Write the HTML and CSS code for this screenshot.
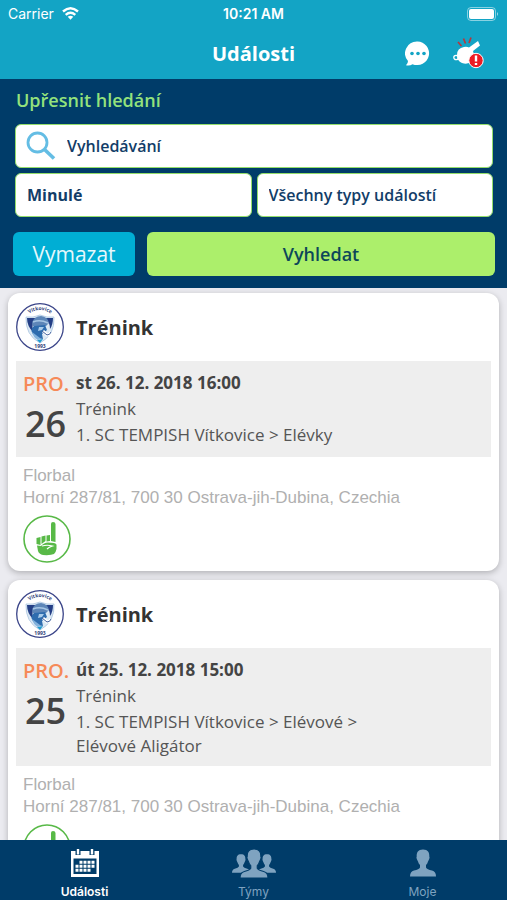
FILE: index.html
```html
<!DOCTYPE html>
<html lang="cs">
<head>
    <meta charset="UTF-8">
    <meta name="viewport" content="width=device-width, initial-scale=1.0">
    <title>Události</title>
    <link rel="stylesheet" href="styles.css">
</head>
<body>
    <!-- Shared icons -->
    <svg class="sprite" aria-hidden="true">
        <path id="logo-arc" d="M7 23 A17 16 0 0 1 41 23" fill="none"/>
        <symbol id="team-logo" viewBox="0 0 48 48">
            <circle cx="24" cy="24" r="23.3" fill="#fff" stroke="#3b4589" stroke-width="1.3"/>
            <path d="M10 14 Q17 15 24 12 Q31 15 38 14 Q39 32 24 40 Q9 32 10 14Z" fill="#dce9f4" stroke="#a9c4df" stroke-width=".8"/>
            <path d="M11 15 L20 15 Q15 20 17 29 Q11 23 11 15Z" fill="#243f86"/>
            <path d="M29 15 L37 15 Q37 22 34 26 Q34 19 29 15Z" fill="#243f86"/>
            <path d="M16 20 Q18 13 25 13 Q32 14 33 20 L30 23 L17 23Z" fill="#5d86b8"/>
            <path d="M17 19 Q24 16 32 20" fill="none" stroke="#a6c6e5" stroke-width="1.4"/>
            <path d="M18 23 L29 22 L31 27 L26 31 L27 36 L21 35 Q14 30 16 25Z" fill="#2e6cae"/>
            <path d="M23 24 L28 24 L26 27 L22 28Z" fill="#a8cbea"/>
            <path d="M16 29 L24 35 L22 37 Q17 34 16 29Z" fill="#83b2dd"/>
            <path d="M27 28 L31 32 Q34 32 35 29" fill="none" stroke="#fff" stroke-width="3"/>
            <path d="M26 28 L31 32 Q34 32 35 29" fill="none" stroke="#405f9c" stroke-width="1"/>
            <path d="M21 37 L27 36 L24 40Z" fill="#219bd0"/>
        </symbol>
        <symbol id="hand" viewBox="0 0 48 48">
            <circle cx="24" cy="24" r="23" fill="#fff" stroke="#58b947" stroke-width="1.6"/>
            <g fill="#58b947">
                <path d="M28 9 Q28 7 30 7 Q32.500 7 32.500 9 V27 L28 26Z"/>
                <path d="M23.500 20.500 L27 20 V26 L23.500 26.500Z"/>
                <path d="M18.500 21.500 L22.500 20.500 V26 L18.500 29Z"/>
                <path d="M13.500 23 L17.500 22 V30 L13.500 29Z"/>
                <path d="M14 30.500 L18 31 Q21 27.500 25 27.500 L31 28 Q34 28.500 33.500 31 V34 Q33 37 31 39 Q28 40.500 20 40 Q16 39 15 36Z"/>
            </g>
            <path d="M19 31 Q24 29.500 29.500 31 Q26 32 24 34" fill="none" stroke="#fff" stroke-width="1.2"/>
        </symbol>
        <symbol id="person" viewBox="0 0 26 27">
            <path d="M13 0 C8 0 6.500 3 6.700 7 Q6 8 7 10 Q7.500 11 8 12 Q8.500 14 10 15.500 V18 Q9 20 4 21 Q0 22 0 27 H26 Q26 22 22 21 Q17 20 16 18 V15.500 Q17.500 14 18 12 Q18.500 11 19 10 Q20 8 19.300 7 C19.500 3 18 0 13 0Z"/>
        </symbol>
    </svg>

    <header class="header">
        <div class="status-bar">
            <div class="carrier">
                <span>Carrier</span>
                <svg width="17" height="13" viewBox="0 0 17 13" fill="none" stroke="#fff" stroke-width="2.400">
                    <path d="M1 4.500 Q8.500 -2 16 4.500M3.700 7.800 Q8.500 3.800 13.300 7.800"/>
                    <path d="M5.700 9.800 Q8.500 7.800 11.300 9.800 L8.500 12.800Z" fill="#fff" stroke="none"/>
                </svg>
            </div>
            <span class="time">10:21 AM</span>
            <svg class="battery" width="32" height="14" viewBox="0 0 32 14">
                <rect x=".5" y=".5" width="28" height="13" rx="3.500" fill="none" stroke="#fff" stroke-opacity=".5"/>
                <rect x="2" y="2" width="25" height="10" rx="2" fill="#fff"/>
                <path d="M30 5 Q32 7 30 9Z" fill="#fff" fill-opacity=".6"/>
            </svg>
        </div>
        <div class="title-bar">
            <h1>Události</h1>
            <div class="actions">
                <button type="button" class="icon-btn" aria-label="Zprávy">
                    <svg width="25" height="25" viewBox="0 0 25 25">
                        <path d="M12.500 0.500 A12 11.800 0 1 1 7.500 23.200 Q5 25 1 24.300 Q3 22.500 3 20 A12 11.800 0 0 1 12.500 .5Z" fill="#fff"/>
                        <g fill="#13a4c5"><circle cx="7" cy="12.500" r="1.800"/><circle cx="13" cy="12.500" r="1.800"/><circle cx="19" cy="12.500" r="1.800"/></g>
                    </svg>
                </button>
                <button type="button" class="icon-btn" aria-label="Upozornění">
                    <svg width="31" height="32" viewBox="0 0 31 32">
                        <path d="M5 5 L8.500 9M10.500 1.500 L12.500 6.500M18 .5 L16 6" stroke="#b9363c" stroke-width="1.700" fill="none"/>
                        <circle cx="3" cy="20.500" r="2.200" fill="none" stroke="#fff" stroke-width="1.300"/>
                        <path d="M4 18 Q4 11 11 10 Q14 9.500 16 10.500 L25 4 L27 8.500 L20 14 Q22 19 19 24 Q15 28 9 26 Q4 24 4 18Z" fill="#fff"/>
                        <circle cx="23" cy="23.500" r="7.200" fill="#ed1c24" stroke="#fff" stroke-width="1"/>
                        <path d="M23 18.500 V24.500M23 26 V28" stroke="#fff" stroke-width="2.400"/>
                    </svg>
                </button>
            </div>
        </div>
    </header>

    <form class="search">
        <h2>Upřesnit hledání</h2>
        <div class="fields">
            <label class="search-box">
                <svg width="30" height="30" viewBox="0 0 30 30" fill="none" stroke="#64bde4">
                    <circle cx="11.500" cy="11.500" r="9.500" stroke-width="2.800"/>
                    <path d="M18 18 L28 27.500" stroke-width="3.600"/>
                </svg>
                <input type="text" placeholder="Vyhledávání" aria-label="Vyhledávání">
            </label>
            <select class="period" aria-label="Období">
                <option>Minulé</option>
            </select>
            <select aria-label="Typ události">
                <option>Všechny typy událostí</option>
            </select>
        </div>
        <div class="buttons">
            <button type="reset" class="clear-btn">Vymazat</button>
            <button type="button" class="submit-btn">Vyhledat</button>
        </div>
    </form>

    <main class="events">
        <article class="card">
            <div class="card-header">
                <svg class="round-icon" viewBox="0 0 48 48">
                    <use href="#team-logo"/>
                    <text class="logo-text" text-anchor="middle"><textPath href="#logo-arc" startOffset="50%">Vítkovice</textPath></text>
                    <text class="logo-text" x="24" y="45" text-anchor="middle">1993</text>
                </svg>
                <h3>Trénink</h3>
            </div>
            <div class="details">
                <div class="day">
                    <span class="month">PRO.</span>
                    <span class="number">26</span>
                </div>
                <div class="info">
                    <p class="date">st 26. 12. 2018 16:00</p>
                    <p>Trénink</p>
                    <p class="team">1. SC TEMPISH Vítkovice &gt; Elévky</p>
                </div>
            </div>
            <div class="venue">
                <p>Florbal</p>
                <p>Horní 287/81, 700 30 Ostrava-jih-Dubina, Czechia</p>
                <button type="button" class="icon-btn" aria-label="Účast"><svg class="round-icon"><use href="#hand"/></svg></button>
            </div>
        </article>

        <article class="card">
            <div class="card-header">
                <svg class="round-icon" viewBox="0 0 48 48">
                    <use href="#team-logo"/>
                    <text class="logo-text" text-anchor="middle"><textPath href="#logo-arc" startOffset="50%">Vítkovice</textPath></text>
                    <text class="logo-text" x="24" y="45" text-anchor="middle">1993</text>
                </svg>
                <h3>Trénink</h3>
            </div>
            <div class="details">
                <div class="day">
                    <span class="month">PRO.</span>
                    <span class="number">25</span>
                </div>
                <div class="info">
                    <p class="date">út 25. 12. 2018 15:00</p>
                    <p>Trénink</p>
                    <p class="team">1. SC TEMPISH Vítkovice &gt; Elévové &gt;<br>Elévové Aligátor</p>
                </div>
            </div>
            <div class="venue">
                <p>Florbal</p>
                <p>Horní 287/81, 700 30 Ostrava-jih-Dubina, Czechia</p>
                <button type="button" class="icon-btn" aria-label="Účast"><svg class="round-icon"><use href="#hand"/></svg></button>
            </div>
        </article>
    </main>

    <nav class="tabs">
        <a href="#" class="active">
            <svg width="28" height="28" viewBox="0 0 28 28">
                <path d="M0 2 H28 V28 H0Z" fill="#fff"/>
                <path d="M2.500 9.500 H25.500 V25 H2.500Z" fill="#003c69"/>
                <path d="M7 0 V6M21 0 V6" stroke="#003c69" stroke-width="5"/>
                <path d="M7 0 V5.500M21 0 V5.500" stroke="#fff" stroke-width="2.400"/>
                <path d="M8.500 13.200 H24M4.500 17.200 H24M4.500 21.200 H20" stroke="#fff" stroke-width="3" stroke-dasharray="3 1"/>
            </svg>
            <span>Události</span>
        </a>
        <a href="#">
            <svg width="44" height="30" viewBox="0 0 44 30" fill="currentColor">
                <use href="#person" x="0" y="5" width="18" height="19"/>
                <use href="#person" x="26" y="5" width="18" height="19"/>
                <use href="#person" x="8" y="0" width="28" height="29" stroke="#003c69" stroke-width="1"/>
            </svg>
            <span>Týmy</span>
        </a>
        <a href="#">
            <svg width="26" height="28" fill="currentColor"><use href="#person"/></svg>
            <span>Moje</span>
        </a>
    </nav>
</body>
</html>
```
FILE: styles.css
```css
* {
    box-sizing: border-box;
}
body {
    display: flex;
    flex-direction: column;
    height: 100vh;
    margin: 0;
    font-family: "Open Sans", "Noto Sans", sans-serif;
    background-color: #ebebf0;
    color: #444;
}
h1, h2, h3, p {
    margin: 0;
}
svg {
    display: block;
}
button, input, select {
    font-family: inherit;
}
.sprite {
    position: absolute;
    width: 0;
    height: 0;
}
.icon-btn {
    padding: 0;
    border: none;
    background: none;
    cursor: pointer;
}

/* Header */
.header {
    background-color: #13a4c5;
    color: white;
}
.status-bar {
    display: grid;
    grid-template-columns: 1fr auto 1fr;
    align-items: center;
    height: 27px;
    padding: 0 8px;
    font: 14px "Inter", sans-serif;
}
.carrier {
    display: flex;
    align-items: center;
    gap: 8px;
}
.time {
    font-weight: 600;
}
.battery {
    justify-self: end;
}
.title-bar {
    display: grid;
    grid-template-columns: 1fr auto 1fr;
    align-items: center;
    height: 52px;
    padding: 0 23px;
}
.title-bar h1 {
    grid-column: 2;
    font-size: 20px;
    font-weight: bold;
}
.actions {
    display: flex;
    align-items: center;
    justify-content: flex-end;
    gap: 23px;
}

/* Search form */
.search {
    padding: 8px 12px 12px 13px;
    background-color: #003c69;
}
.search h2 {
    padding-left: 3px;
    font-size: 18px;
    font-weight: 600;
    line-height: 26px;
    color: #93e27c;
}
.fields {
    display: grid;
    grid-template-columns: 1fr 1fr;
    gap: 5px;
    padding: 11px 2px 15px;
}
.search-box, select {
    height: 44px;
    border: 1px solid #93dc6b;
    border-radius: 6px;
    background-color: white;
    color: #123d68;
    font-size: 16px;
    font-weight: 600;
}
.search-box {
    grid-column: 1 / 3;
    display: flex;
    align-items: center;
    gap: 11px;
    padding: 0 10px;
}
.search-box input {
    flex: 1;
    min-width: 0;
    padding: 0;
    border: none;
    outline: none;
    background: none;
    color: inherit;
    font-size: 16px;
    font-weight: 600;
}
.search-box input::placeholder {
    color: inherit;
    opacity: 1;
}
select {
    appearance: none;
    min-width: 0;
    padding: 0 11px;
}
.period {
    font-weight: bold;
}
.buttons {
    display: flex;
    gap: 12px;
}
.buttons button {
    height: 44px;
    padding: 0;
    border: none;
    border-radius: 6px;
    cursor: pointer;
}
.clear-btn {
    width: 122px;
    background-color: #00aed4;
    color: #e6f8fc;
    font-size: 21px;
}
.submit-btn {
    flex: 1;
    background-color: #acef6b;
    color: #0d4759;
    font-size: 18px;
    font-weight: 600;
}

/* Event list */
.events {
    flex: 1;
    min-height: 0;
    overflow: hidden;
    padding: 5px 8px 0;
}
.card {
    margin-bottom: 9px;
    padding: 10px 8px 8px;
    border-radius: 12px;
    background-color: white;
    box-shadow: 0 2px 6px rgba(0,0,0,0.25);
}
.card-header {
    display: flex;
    align-items: center;
    gap: 12px;
    margin-bottom: 10px;
}
.card-header h3 {
    font-size: 20px;
    font-weight: bold;
    color: #333;
}
.round-icon {
    width: 48px;
    height: 48px;
}
.logo-text {
    font-size: 5px;
    font-weight: bold;
    fill: #2f4079;
}
.details {
    display: flex;
    padding: 9px 7px 8px;
    background-color: #eee;
}
.day {
    width: 53px;
}
.month, .number {
    display: block;
    font-weight: 600;
}
.month {
    font-size: 20px;
    line-height: 28px;
    color: #f68a58;
}
.number {
    padding-left: 2px;
    font-size: 36px;
    line-height: 51px;
}
.info {
    font-size: 17px;
    line-height: 26px;
    color: #555;
}
.info .date {
    font-weight: bold;
    color: #444;
}
.info .team {
    padding-top: 1px;
    line-height: 24px;
}
.venue {
    padding: 8px 7px 0;
    font: 17px/22px "Liberation Sans", Arial, sans-serif;
    color: #b0b0b0;
}
.venue .icon-btn {
    display: block;
    margin-top: 6px;
}

/* Bottom tabs */
.tabs {
    display: grid;
    grid-template-columns: repeat(3, 1fr);
    height: 60px;
    background-color: #003c69;
}
.tabs a {
    display: flex;
    flex-direction: column;
    align-items: center;
    justify-content: space-between;
    padding: 9px 0 0;
    color: #7fa3c0;
    font: 12px/16px "Inter", sans-serif;
    text-decoration: none;
}
.tabs .active {
    color: white;
    font-weight: 600;
}
```
